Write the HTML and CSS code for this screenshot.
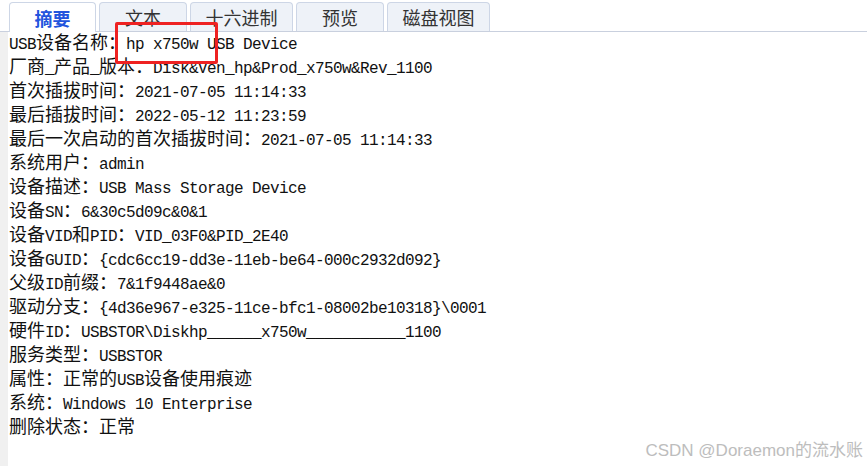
FILE: index.html
```html
<!DOCTYPE html>
<html lang="zh-CN">
<head>
<meta charset="utf-8">
<title>USB</title>
<link rel="stylesheet" href="styles.css">
</head>
<body>
<div class="app">
  <div class="tabs">
    <div class="tab tab-2 active">摘要</div>
    <div class="tab tab-2">文本</div>
    <div class="tab tab-4">十六进制</div>
    <div class="tab tab-2">预览</div>
    <div class="tab tab-4">磁盘视图</div>
  </div>
  <div class="panel">
    <div class="strip"></div>
    <div class="lines">
      <div class="row"><span class="m">USB</span>设备名称：<span class="m">hp x750w USB Device</span></div>
      <div class="row">厂商<span class="m">_</span>产品<span class="m">_</span>版本：<span class="m">Disk&amp;Ven_hp&amp;Prod_x750w&amp;Rev_1100</span></div>
      <div class="row">首次插拔时间：<span class="m">2021-07-05 11:14:33</span></div>
      <div class="row">最后插拔时间：<span class="m">2022-05-12 11:23:59</span></div>
      <div class="row">最后一次启动的首次插拔时间：<span class="m">2021-07-05 11:14:33</span></div>
      <div class="row">系统用户：<span class="m">admin</span></div>
      <div class="row">设备描述：<span class="m">USB Mass Storage Device</span></div>
      <div class="row">设备<span class="m">SN</span>：<span class="m">6&amp;30c5d09c&amp;0&amp;1</span></div>
      <div class="row">设备<span class="m">VID</span>和<span class="m">PID</span>：<span class="m">VID_03F0&amp;PID_2E40</span></div>
      <div class="row">设备<span class="m">GUID</span>：<span class="m">{cdc6cc19-dd3e-11eb-be64-000c2932d092}</span></div>
      <div class="row">父级<span class="m">ID</span>前缀：<span class="m">7&amp;1f9448ae&amp;0</span></div>
      <div class="row">驱动分支：<span class="m">{4d36e967-e325-11ce-bfc1-08002be10318}\0001</span></div>
      <div class="row">硬件<span class="m">ID</span>：<span class="m">USBSTOR\Diskhp______x750w___________1100</span></div>
      <div class="row">服务类型：<span class="m">USBSTOR</span></div>
      <div class="row">属性：正常的<span class="m">USB</span>设备使用痕迹</div>
      <div class="row">系统：<span class="m">Windows 10 Enterprise</span></div>
      <div class="row">删除状态：正常</div>
    </div>
  </div>
  <div class="highlight"></div>
  <div class="watermark">CSDN @Doraemon的流水账</div>
</div>
</body>
</html>
```

FILE: styles.css
```css
html, body {
  margin: 0;
  padding: 0;
  background: #ffffff;
}

.app {
  position: relative;
  width: 867px;
  height: 466px;
  overflow: hidden;
  background: #ffffff;
}

.tabs {
  display: flex;
  gap: 3px;
  padding: 2px 0 0 9px;
  height: 29px;
  border-bottom: 1px solid #c9d0de;
  box-sizing: content-box;
}

.tab {
  height: 29px;
  box-sizing: border-box;
  display: flex;
  align-items: center;
  justify-content: center;
  border: 1px solid #cdd6e6;
  border-bottom: none;
  border-radius: 4px 4px 0 0;
  background: #eef2f8;
  color: #333333;
  font-family: "Noto Sans CJK SC", sans-serif;
  font-size: 18px;
  line-height: 1;
}

.tab-2 { width: 88px; }
.tab-4 { width: 103px; }

.tab.active {
  width: 87px;
  background: #ffffff;
  color: #2255dd;
  font-weight: 700;
  height: 30px;
  margin-bottom: -1px;
}

.panel {
  display: flex;
  height: 434px;
}

.strip {
  width: 8px;
  background: #f0f0f0;
  flex: none;
}

.lines {
  padding: 0 0 0 1px;
  margin-top: -3px;
}

.row {
  height: 24px;
  line-height: 24px;
  font-family: "Noto Sans CJK SC", serif;
  font-size: 18px;
  color: #111111;
  white-space: pre;
}

.m {
  font-family: "Liberation Mono", monospace;
  font-size: 16px;
  letter-spacing: -0.6px;
}

.highlight {
  position: absolute;
  left: 115px;
  top: 22px;
  width: 103px;
  height: 42px;
  box-sizing: border-box;
  border: 3px solid #ee2222;
  border-radius: 2px;
}

.watermark {
  position: absolute;
  right: 4px;
  bottom: 5px;
  font-family: "Liberation Sans", "Noto Sans CJK SC", sans-serif;
  font-size: 17px;
  color: #bdbdbd;
}
```
